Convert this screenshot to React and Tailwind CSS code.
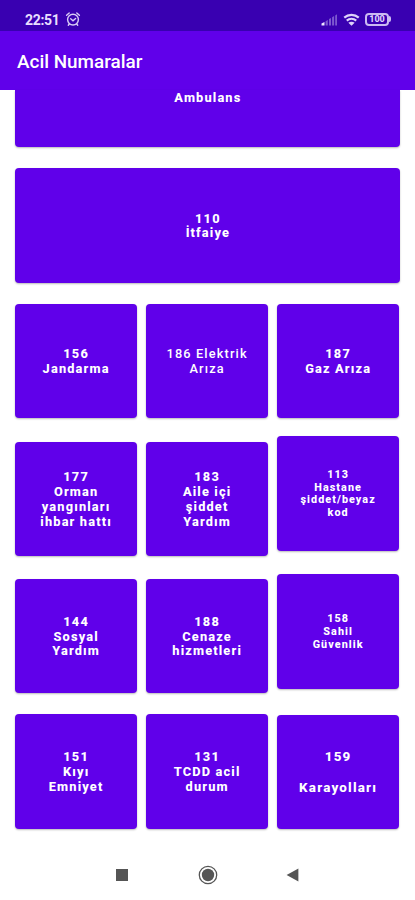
import React from "react";

const SHADOW = "shadow-[0_1px_2px_rgba(0,0,0,0.28)]";

function Card({
  lines,
  className = "",
  shape = "h-[114.5px] justify-center rounded-[4px] pt-[2.4px]",
  text = "text-[12.8px] leading-[14.8px] tracking-[1.15px] font-extrabold",
}) {
  return (
    <button
      className={`flex shrink-0 flex-col items-center bg-[#6000ea] text-center text-white ${SHADOW} ${shape} ${text} ${className}`}
    >
      {lines.map((line, i) => (
        <span key={i} className="block min-h-[1em] whitespace-nowrap">
          {line}
        </span>
      ))}
    </button>
  );
}

const third = "w-[121.5px]";
const small = "text-[10.8px] leading-[12.7px] tracking-[1.05px] font-extrabold";

function Row({ className = "", children }) {
  return <div className={`flex h-[114.5px] shrink-0 items-start gap-[9.5px] ${className}`}>{children}</div>;
}

function AlarmIcon() {
  return (
    <svg width="16" height="16" viewBox="0 0 16 16" fill="none" stroke="#d9ccf5" strokeWidth="1.4" strokeLinecap="round">
      <circle cx="8" cy="8.6" r="5.4" />
      <path d="M1.6 4.2 4.2 1.9M14.4 4.2 11.8 1.9M5.7 7.8 8 9.8l2.6-2.3M4.3 13l-1 1.2M11.7 13l1 1.2" />
    </svg>
  );
}

function SignalIcon() {
  return (
    <svg width="17" height="13" viewBox="0 0 17 13">
      <path d="M0.5 12.5V10.5L3.5 9V12.5Z" fill="#eee8ff" />
      <path d="M4.6 12.5V8.2L6.8 7V12.5ZM8 12.5V6L10 4.9V12.5ZM11.1 12.5V4.2L13.1 3V12.5ZM14.2 12.5V2.4L16 1.2V12.5Z" fill="#7d59cf" />
    </svg>
  );
}

function WifiIcon() {
  return (
    <svg width="17" height="13" viewBox="0 0 18 14" fill="none" stroke="#ded2fa" strokeWidth="2.3">
      <path d="M1.2 5C5.6 1 12.4 1 16.8 5" />
      <path d="M3.9 8.2C6.8 5.6 11.2 5.6 14.1 8.2" />
      <path d="M9 13.8 5.6 10.6C7.6 9 10.4 9 12.4 10.6Z" fill="#ded2fa" stroke="none" />
    </svg>
  );
}

function Battery() {
  return (
    <div className="flex items-center">
      <div className="flex h-[12.5px] w-[24px] items-center justify-center rounded-[4px] border-2 border-[#cbbaf2] text-[9px] font-extrabold leading-none text-[#ded2fa]">
        100
      </div>
      <div className="h-[6px] w-[2px] rounded-r-full bg-[#cbbaf2]" />
    </div>
  );
}

export default function App() {
  return (
    <div className="flex h-[900px] w-[415px] flex-col overflow-hidden bg-white font-[Roboto,sans-serif]">
      <div className="flex h-[30.5px] shrink-0 items-center bg-[#3900b1] pt-[8px] pl-[25px] pr-[24px]">
        <span className="w-[40px] pt-px text-[14px] font-bold leading-none tracking-[-0.3px] text-[#e8dfff]">22:51</span>
        <AlarmIcon />
        <div className="ml-auto flex items-center gap-[5px]">
          <SignalIcon />
          <WifiIcon />
          <Battery />
        </div>
      </div>
      <header className="flex h-[59.5px] shrink-0 items-center bg-[#6000ea] pl-[17px] pt-[5px]">
        <h1 className="text-[18.9px] font-medium leading-none text-white">Acil Numaralar</h1>
      </header>
      <main className="flex h-[760px] shrink-0 flex-col pl-[15.4px]">
        <Card
          lines={["Ambulans"]}
          shape="h-[57px] justify-start rounded-b-[4px] pt-[1px]"
          className="w-[385px]"
        />
        <Card lines={["110", "İtfaiye"]} className="mt-[21px] w-[385px]" />
        <Row className="mt-[21px]">
          <Card lines={["156", "Jandarma"]} className={third} />
          <Card
            lines={["186 Elektrik", "Arıza"]}
            className={third}
            text="text-[12.75px] leading-[14.8px] tracking-[1.15px] font-medium"
          />
          <Card lines={["187", "Gaz Arıza"]} className={third} />
        </Row>
        <Row className="mt-[23.5px]">
          <Card lines={["177", "Orman", "yangınları", "ihbar hattı"]} className={third} />
          <Card lines={["183", "Aile içi", "şiddet", "Yardım"]} className={third} />
          <Card lines={["113", "Hastane", "şiddet/beyaz", "kod"]} className={`${third} -mt-[5.5px]`} text={small} />
        </Row>
        <Row className="mt-[22.5px]">
          <Card lines={["144", "Sosyal", "Yardım"]} className={third} />
          <Card lines={["188", "Cenaze", "hizmetleri"]} className={third} />
          <Card lines={["158", "Sahil", "Güvenlik"]} className={`${third} -mt-[4.5px]`} text={small} />
        </Row>
        <Row className="mt-[21px]">
          <Card lines={["151", "Kıyı", "Emniyet"]} className={third} />
          <Card lines={["131", "TCDD acil", "durum"]} className={third} />
          <Card
            lines={["159", "\u00a0", "Karayolları"]}
            className={`${third} mt-[0.7px]`}
            shape="h-[114.5px] justify-center rounded-[4px] pt-[0.5px]"
            text="text-[13.4px] leading-[15.5px] tracking-[1.2px] font-extrabold"
          />
        </Row>
      </main>
      <nav className="flex h-[50px] shrink-0 items-center justify-between pl-[115.5px] pr-[116px]">
        <div className="h-[12.5px] w-[12.5px] bg-[#555]" />
        <svg className="ml-px" width="20" height="20" viewBox="0 0 20 20">
          <circle cx="10" cy="10" r="8.7" fill="none" stroke="#555" strokeWidth="1.3" />
          <circle cx="10" cy="10" r="6.2" fill="#555" />
        </svg>
        <svg width="13" height="14" viewBox="0 0 13 14">
          <path d="M12.4 0.4V13.6L0.6 7Z" fill="#555" />
        </svg>
      </nav>
    </div>
  );
}
